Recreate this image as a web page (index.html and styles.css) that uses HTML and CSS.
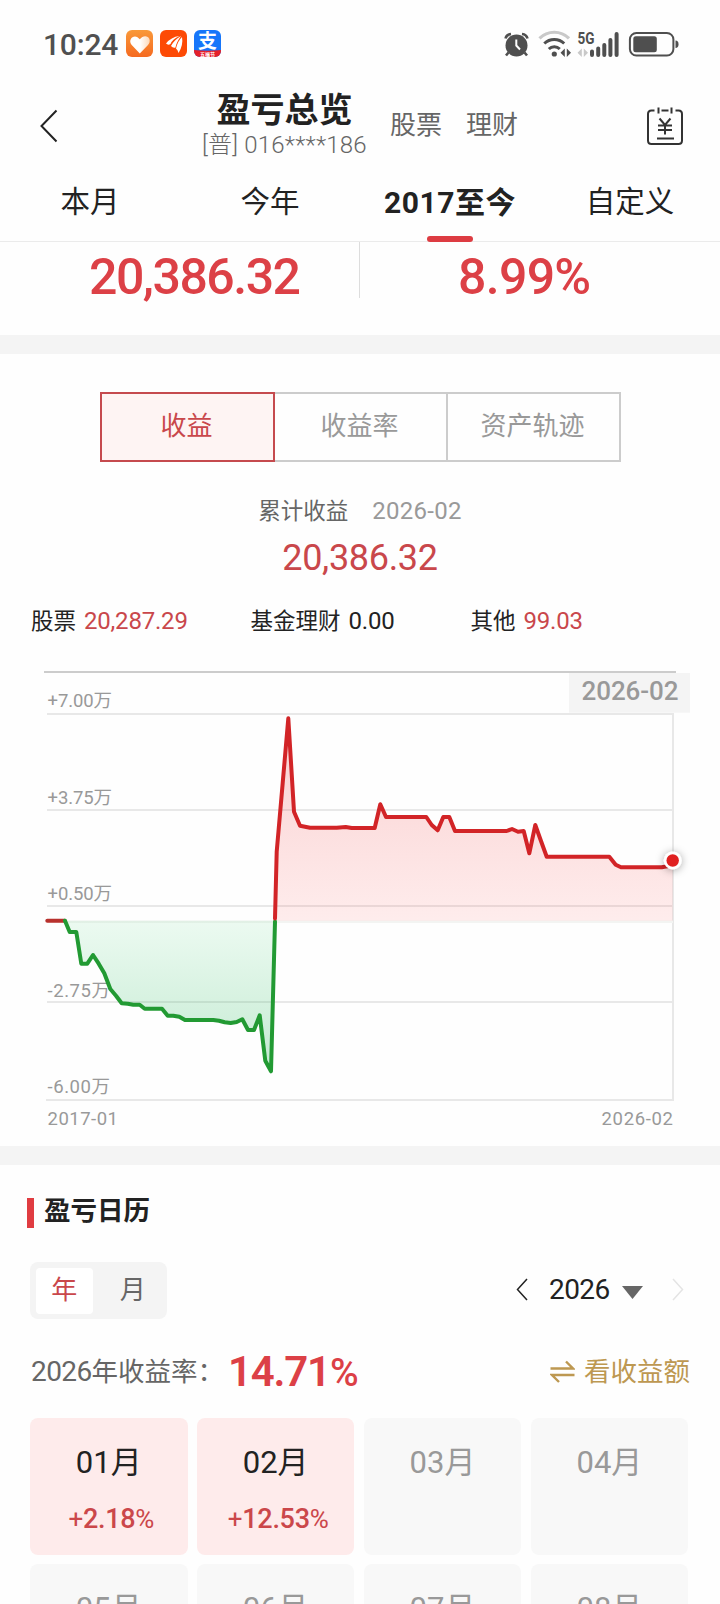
FILE: index.html
```
<!DOCTYPE html>
<html lang="zh-CN">
<head>
  <meta charset="UTF-8">
  <meta name="viewport" content="width=device-width, initial-scale=1.0">
  <title>盈亏总览</title>
  <link rel="stylesheet" href="styles.css">
</head>
<body>
  <div class="status-bar">
    <span class="time">10:24</span>
    <svg class="app-icons" width="96" height="28" viewBox="0 0 96 28">
      <defs>
        <linearGradient id="orange" x1="0" y1="0" x2="0" y2="1">
          <stop offset="0" stop-color="#f9993a"/>
          <stop offset="1" stop-color="#f56a20"/>
        </linearGradient>
        <linearGradient id="heart" x1="0" y1="0" x2="1" y2="0">
          <stop offset="0" stop-color="#fff"/>
          <stop offset="0.5" stop-color="#fff"/>
          <stop offset="1" stop-color="#fdd9b8"/>
        </linearGradient>
        <clipPath id="payClip"><rect x="68" y="0" width="27" height="27" rx="6"/></clipPath>
      </defs>
      <rect x="0" y="0" width="27" height="27" rx="6" fill="url(#orange)"/>
      <path d="M13.8 23.5 L5.5 14.8 C1.8 10 7 4.6 11.5 7.3 L13.8 9.3 C17 5 22 5.6 23.4 9 C24.3 11.5 23.3 13.6 22 15 Z" fill="url(#heart)"/>
      <rect x="34" y="0" width="27" height="27" rx="6" fill="#fd4a05"/>
      <path d="M40 13.5 Q45 7 53.5 6 Q46 9.5 44.5 14 Q42 15.5 40 13.5 Z M45 16 Q48.5 9.5 55 6 Q50.5 12 49.5 17.5 Q47 18.5 45 16 Z M50 18.5 Q51.5 11.5 56 7 Q57.5 15 52.5 23 Q52 20 50 18.5 Z" fill="#fff"/>
      <g clip-path="url(#payClip)">
        <rect x="68" y="0" width="27" height="28" fill="#1676fa"/>
        <path d="M68 20 Q81.5 21.5 95 20 V28 H68 Z" fill="#e5202a"/>
        <text x="81.5" y="18.2" class="pay-char">支</text>
        <text x="81.5" y="26" class="pay-tag">五福节</text>
      </g>
    </svg>
    <svg class="sys-icons" width="178" height="30" viewBox="0 0 178 30" fill="none" stroke="#4f4f4f">
      <!-- alarm -->
      <circle cx="16.5" cy="15.5" r="11" fill="#4f4f4f" stroke="none"/>
      <path d="M5.5 8.5 Q6.5 4.5 11 4 M22 4 Q26.5 4.5 27.5 8.5" stroke-width="2.6"/>
      <path d="M8.5 22.5 L6 25.5 M24.5 22.5 L27 25.5" stroke-width="2.6"/>
      <path d="M16.3 9.5 V15.5 L20 19.5" stroke="#fff" stroke-width="2"/>
      <!-- wifi -->
      <path d="M39.5 8.3 A21 21 0 0 1 69 8.3" stroke="#c9c9c9" stroke-width="3.2"/>
      <path d="M44.3 13.5 A14.5 14.5 0 0 1 64.2 13.5" stroke-width="3"/>
      <path d="M48.8 19 A8 8 0 0 1 59.8 19" stroke-width="3"/>
      <circle cx="54.3" cy="24" r="2.6" fill="#4f4f4f" stroke="none"/>
      <path d="M64.8 18.5 V27 L60.5 22.8 Z M66.8 18.5 V27 L71 22.8 Z" fill="#4f4f4f" stroke="none"/>
      <!-- signal -->
      <text x="77.5" y="13.5" class="net" textLength="17" lengthAdjust="spacingAndGlyphs">5G</text>
      <path d="M81.8 18.5 V27 L77.5 22.8 Z M83.8 18.5 V27 L88 22.8 Z" fill="#c9c9c9" stroke="none"/>
      <path d="M92 21.5 V25 M98.2 18.5 V25 M104.3 15 V25 M110.4 10 V25 M116.6 4 V25" stroke-width="4" stroke-linecap="round"/>
      <!-- battery -->
      <rect x="129.9" y="3" width="43.5" height="22.5" rx="6.5" stroke-width="2"/>
      <rect x="133.3" y="6.3" width="23.5" height="16" rx="2.5" fill="#4f4f4f" stroke="none"/>
      <path d="M175.5 10.5 Q178.5 10.5 178.5 14.2 Q178.5 18 175.5 18 Z" fill="#4f4f4f" stroke="none"/>
    </svg>
  </div>

  <header class="header">
    <svg class="back" width="20" height="36" viewBox="0 0 20 36">
      <path d="M17.5 2.5 L2.5 18 L17.5 33.5" fill="none" stroke="#222" stroke-width="2"/>
    </svg>
    <div class="title">
      <h1>盈亏总览</h1>
      <p>[普] 016****186</p>
    </div>
    <a class="link">股票</a>
    <a class="link">理财</a>
    <svg class="bill" width="38" height="40" viewBox="0 0 38 40" fill="none" stroke="#333" stroke-width="2">
      <path d="M8.5 4.5 H5.5 Q2 4.5 2 8 V34.5 Q2 38 5.5 38 H32.5 Q36 38 36 34.5 V8 Q36 4.5 32.5 4.5 H29.5"/>
      <path d="M15.5 4.5 H22.5 M12.5 1.5 V7.5 M25.5 1.5 V7.5"/>
      <path d="M13.5 12.5 L19 19 L24.5 12.5 M19 19 V28.5 M12 19.5 H26 M12 24 H26 M11 32.5 H28"/>
    </svg>
  </header>

  <nav class="tabs">
    <a>本月</a>
    <a>今年</a>
    <a class="active">2017至今</a>
    <a>自定义</a>
  </nav>

  <section class="summary">
    <div class="total">20,386.32</div>
    <div class="percent">8.99%</div>
  </section>

  <section class="profit">
    <div class="segment">
      <button class="active">收益</button>
      <button>收益率</button>
      <button>资产轨迹</button>
    </div>
    <div class="caption"><span>累计收益</span><span class="date">2026-02</span></div>
    <div class="amount">20,386.32</div>
    <div class="breakdown">
      <div>股票<span class="red">20,287.29</span></div>
      <div>基金理财<span>0.00</span></div>
      <div>其他<span class="red">99.03</span></div>
    </div>

    <svg class="chart" width="720" height="496" viewBox="0 0 720 496">
      <defs>
        <linearGradient id="gain" x1="0" y1="68" x2="0" y2="270" gradientUnits="userSpaceOnUse">
          <stop offset="0" stop-color="#e02020" stop-opacity="0.21"/>
          <stop offset="1" stop-color="#ff2020" stop-opacity="0.08"/>
        </linearGradient>
        <linearGradient id="loss" x1="0" y1="270" x2="0" y2="421" gradientUnits="userSpaceOnUse">
          <stop offset="0" stop-color="#1ec85a" stop-opacity="0.08"/>
          <stop offset="1" stop-color="#14a84a" stop-opacity="0.25"/>
        </linearGradient>
        <filter id="dotShadow" x="-100%" y="-100%" width="300%" height="300%">
          <feDropShadow dx="0" dy="1" stdDeviation="4" flood-color="#000" flood-opacity="0.35"/>
        </filter>
      </defs>

      <rect x="44" y="21" width="632" height="2" fill="#ccc"/>

      <!-- grid -->
      <g fill="#e8e8e8">
        <rect x="47" y="63" width="626" height="2"/>
        <rect x="47" y="159" width="626" height="2"/>
        <rect x="47" y="255" width="626" height="2"/>
        <rect x="47" y="351" width="626" height="2"/>
        <rect x="46" y="449" width="628" height="2"/>
        <rect x="672" y="63" width="2" height="388"/>
      </g>
      <rect x="66" y="270.5" width="607" height="2.5" fill="#f3f4f2"/>

      <g class="axis">
        <text x="47.5" y="56.5" textLength="64.5">+7.00万</text>
        <text x="47.5" y="153.5" textLength="64.5">+3.75万</text>
        <text x="47.5" y="250" textLength="64.5">+0.50万</text>
        <text x="47.5" y="346.5" textLength="62.5">-2.75万</text>
        <text x="47.5" y="442.5" textLength="62.5">-6.00万</text>
        <text x="47.5" y="474.5" textLength="70.5">2017-01</text>
        <text x="601.5" y="474.5" textLength="71.5">2026-02</text>
      </g>

      <path fill="url(#loss)" d="M64.7 270.7 L69.7 282 L76.3 282 L81.3 313.7 L87.3 313.7 L93 305 L98.7 313.7 L104.3 323.3 L110.3 339 L116 345.7 L121.7 353.3 L139.7 354.7 L144.7 358.7 L162 358.7 L167.7 365.7 L179.3 366.7 L185 370 L213.3 370 L230.7 373 L242.3 369.3 L248 380 L254 380 L259.7 365.3 L265.3 410.7 L271 421.3 L275 270.7 Z"/>
      <path fill="url(#gain)" d="M275 270.7 L276.7 201.7 L282.7 133 L288.3 68.3 L294 161.7 L300 175.7 L310 177.7 L374.7 178 L380.3 154.3 L386 167 L426.3 167 L431.7 175 L437.7 180.3 L443.3 167 L449.3 167 L455 181 L506.7 181 L512 179 L518 181.7 L523.7 181 L529.3 203.3 L535.3 175 L541 191 L546.7 206.7 L609.3 206.7 L615.7 214.7 L621 217.3 L661.7 217.3 L672.7 215 V270.7 Z"/>

      <g fill="none" stroke-width="4" stroke-linejoin="round" stroke-linecap="round">
        <path stroke="#b8312d" d="M47.3 270.7 H64.7"/>
        <path stroke="#229a33" d="M65 270.7 L69.7 282 L76.3 282 L81.3 313.7 L87.3 313.7 L93 305 L98.7 313.7 L104.3 323.3 L110.3 339 L116 345.7 L121.7 353.3 L127.7 353.7 L133.3 354.7 L139.7 354.7 L144.7 358.7 L162 358.7 L167.7 365.7 L173.3 365.7 L179.3 366.7 L185 370 L213.3 370 L219 370.7 L224.7 372.3 L230.7 373 L236.7 372 L242.3 369.3 L248 380 L254 380 L259.7 365.3 L265.3 410.7 L271 421.3 L275 271.5"/>
        <path stroke="#d22427" d="M275 268.5 L276.7 201.7 L282.7 133 L288.3 68.3 L294 161.7 L300 175.7 L310 177.7 L336.7 177.7 L345.7 177 L351.7 178 L374.7 178 L380.3 154.3 L386 167 L426.3 167 L431.7 175 L437.7 180.3 L443.3 167 L449.3 167 L455 181 L506.7 181 L512 179 L518 181.7 L523.7 181 L529.3 203.3 L535.3 175 L541 191 L546.7 206.7 L609.3 206.7 L615.7 214.7 L621 217.3 L661.7 217.3 L667.3 216.3 L672.7 210.3"/>
      </g>
      <circle cx="672.7" cy="210.5" r="9" fill="#fff" filter="url(#dotShadow)"/>
      <circle cx="672.7" cy="210.5" r="6.2" fill="#e02020"/>

      <rect x="569" y="23" width="121" height="39.7" fill="#f4f4f4"/>
      <text x="581.5" y="50" class="tip" textLength="97">2026-02</text>
    </svg>
  </section>

  <section class="calendar">
    <h2>盈亏日历</h2>
    <div class="toolbar">
      <div class="switch">
        <span class="active">年</span>
        <span>月</span>
      </div>
      <div class="year">
        <svg width="12" height="23" viewBox="0 0 12 23"><path d="M11 1 L1.5 11.5 L11 22" fill="none" stroke="#222" stroke-width="1.5"/></svg>
        <span>2026</span>
        <svg class="arrow" width="21" height="13" viewBox="0 0 21 13"><path d="M0 0 H21 L10.5 13 Z" fill="#666"/></svg>
        <svg class="next" width="12" height="23" viewBox="0 0 12 23"><path d="M1 1 L10.5 11.5 L1 22" fill="none" stroke="#e4e4e4" stroke-width="1.5"/></svg>
      </div>
    </div>
    <div class="rate">
      <span class="label"><i>2026</i>年收益率：</span>
      <strong>14.71<small>%</small></strong>
      <a>
        <svg width="25" height="23" viewBox="0 0 25 23" fill="none" stroke="#bd9851" stroke-width="2.4"><path d="M0.5 8.5 H23 L16 1.5 M24.5 15 H2 L9 22"/></svg>
        看收益额
      </a>
    </div>
    <div class="months">
      <div class="month up"><b>01月</b><em>+<i>2.18</i>%</em></div>
      <div class="month up"><b>02月</b><em>+<i>12.53</i>%</em></div>
      <div class="month"><b>03月</b></div>
      <div class="month"><b>04月</b></div>
      <div class="month"><b>05月</b></div>
      <div class="month"><b>06月</b></div>
      <div class="month"><b>07月</b></div>
      <div class="month"><b>08月</b></div>
    </div>
  </section>
</body>
</html>
```
FILE: styles.css
```
* {
  box-sizing: border-box;
}
body {
  margin: 0;
  width: 720px;
  height: 1604px;
  overflow: hidden;
  font-family: Roboto, "Noto Sans CJK SC", sans-serif;
  background: #fefefe;
  color: #222;
}
h1, h2, p {
  margin: 0;
}
i, em {
  font-style: normal;
}
svg {
  display: block;
  flex: none;
}

/* status bar */
.status-bar {
  display: flex;
  align-items: center;
  height: 88px;
  padding: 0 42px 0 43px;
}
.time {
  width: 83px;
  font-size: 30px;
  font-weight: 500;
  letter-spacing: -0.2px;
  color: #505050;
}
.sys-icons {
  margin: 1px 0 0 auto;
  overflow: visible;
}
.pay-char {
  font: bold 19px "Noto Sans CJK SC", sans-serif;
  fill: #fff;
  text-anchor: middle;
}
.pay-tag {
  font: bold 5px "Noto Sans CJK SC", sans-serif;
  fill: #fff;
  text-anchor: middle;
}
.net {
  font: bold 16px Roboto, sans-serif;
  fill: #4f4f4f;
  stroke: none;
}

/* header */
.header {
  display: flex;
  align-items: center;
  height: 76px;
  padding: 0 36px 0 39px;
}
.back {
  margin-top: -1px;
}
.title {
  width: 170px;
  margin-left: 140.5px;
  text-align: center;
}
.title h1 {
  font-size: 34px;
  line-height: 38px;
}
.title p {
  font-size: 24px;
  line-height: 32px;
  font-weight: 300;
  letter-spacing: 0.2px;
  color: #666;
  white-space: nowrap;
}
.link {
  margin: -8px 0 0 20.5px;
  font-size: 26px;
  color: #666;
}
.link + .link {
  margin-left: 24px;
}
.bill {
  margin-left: auto;
}

/* period tabs */
.tabs {
  display: flex;
  height: 78px;
  border-bottom: 1px solid #ebebeb;
}
.tabs a {
  position: relative;
  flex: 1;
  font-size: 29.5px;
  line-height: 77px;
  text-align: center;
}
.tabs .active {
  font-weight: bold;
  font-size: 30px;
  letter-spacing: 0.5px;
}
.tabs .active::after {
  content: "";
  position: absolute;
  left: 67px;
  bottom: -1px;
  width: 46px;
  height: 6px;
  border-radius: 3px;
  background: #dd3c42;
}

.summary {
  display: flex;
  height: 112px;
  border-bottom: 19px solid #f4f4f4;
}
.summary div {
  width: 360px;
  height: 56px;
  font-size: 50px;
  line-height: 71px;
  font-weight: 500;
  letter-spacing: -0.7px;
  color: #dc4046;
}
.summary .total {
  padding-left: 89px;
  border-right: 1px solid #ddd;
  letter-spacing: -1.5px;
}
.summary .percent {
  padding-left: 98px;
}

/* profit */
.profit {
  height: 811px;
  padding-top: 38px;
  border-bottom: 19px solid #f4f4f4;
}
.segment {
  display: flex;
  width: 521px;
  height: 70px;
  margin: 0 auto 0 100px;
}
.segment button {
  width: 173px;
  padding: 0 2px 8px 0;
  border: 2px solid #ccc;
  border-left: none;
  background: none;
  font: inherit;
  font-size: 26px;
  color: #999;
}
.segment .active {
  width: 175px;
  border: 2px solid #c54a4e;
  background: #fef4f3;
  color: #c9474b;
}
.caption {
  display: flex;
  justify-content: center;
  gap: 24px;
  height: 34px;
  margin-top: 32px;
  font-size: 22.5px;
  line-height: 34px;
  color: #666;
}
.caption .date {
  font-size: 24px;
  letter-spacing: 0.3px;
  color: #999;
}
.amount {
  margin-top: 6px;
  font-size: 36px;
  line-height: 48px;
  text-align: center;
  letter-spacing: -0.3px;
  color: #c9474b;
}
.breakdown {
  display: grid;
  grid-template-columns: 219.5px 220px 1fr;
  height: 68px;
  padding-left: 31px;
  font-size: 22.5px;
  line-height: 78px;
}
.breakdown span {
  margin-left: 8px;
  font-size: 24px;
  letter-spacing: -0.2px;
}
.breakdown .red {
  color: #c9474b;
}

.axis {
  font-size: 18.5px;
  fill: #999;
}
.tip {
  font-size: 26px;
  font-weight: 500;
  fill: #999;
}

/* calendar */
.calendar {
  padding: 26px 31px 0 30px;
}
.calendar h2 {
  display: flex;
  align-items: center;
  height: 40px;
  margin-left: -3px;
  font-size: 26.5px;
  line-height: 36px;
}
.calendar h2::before {
  content: "";
  width: 7px;
  height: 30px;
  margin: 4px 10px 0 0;
  background: #e03c41;
}
.toolbar {
  display: flex;
  justify-content: space-between;
  margin-top: 31px;
}
.switch {
  display: flex;
  width: 137px;
  height: 57px;
  padding: 6px;
  border-radius: 8px;
  background: #f4f4f4;
  font-size: 26px;
  line-height: 44px;
  text-align: center;
  color: #666;
}
.switch span {
  width: 57px;
  height: 46px;
}
.switch span + span {
  margin-left: 12px;
}
.switch .active {
  border-radius: 4px;
  background: #fff;
  color: #c9474b;
}
.year {
  display: flex;
  align-items: center;
  height: 55px;
  margin-right: 5px;
}
.year span {
  width: 62px;
  margin-left: 21px;
  font-size: 28px;
  letter-spacing: -0.6px;
}
.year .arrow {
  margin: 6px 29px 0 11px;
}
.rate {
  display: flex;
  align-items: center;
  height: 60px;
  margin-top: 22px;
}
.rate .label {
  width: 197px;
  margin: -4px 0 0 1px;
  font-size: 26.5px;
  color: #666;
  white-space: nowrap;
}
.rate .label i {
  font-size: 28px;
  letter-spacing: -0.6px;
}
.rate strong {
  font-size: 42px;
  font-weight: 600;
  letter-spacing: -1.2px;
  color: #dc4046;
}
.rate small {
  font-size: 39px;
  font-weight: 500;
}
.rate a {
  display: flex;
  align-items: center;
  gap: 9px;
  margin: -4px -1px 0 auto;
  font-size: 26.5px;
  color: #bd9851;
}
.rate a svg {
  margin-top: 5px;
}
.months {
  display: grid;
  grid-template-columns: repeat(4, 157.5px);
  grid-auto-rows: 137px;
  gap: 9px 9.4px;
  margin-top: 17px;
}
.month {
  padding-top: 21px;
  border-radius: 8px;
  background: #f8f8f8;
  text-align: center;
  color: #999;
}
.month b {
  display: block;
  font-size: 31px;
  line-height: 48px;
  font-weight: 400;
}
.month em {
  display: block;
  padding-left: 5px;
  font-size: 26px;
  line-height: 65px;
  letter-spacing: -0.3px;
}
.month em i {
  font-size: 27px;
  font-weight: 500;
}
.up {
  background: #feebeb;
  color: #222;
}
.up em {
  color: #cb474a;
}
```
